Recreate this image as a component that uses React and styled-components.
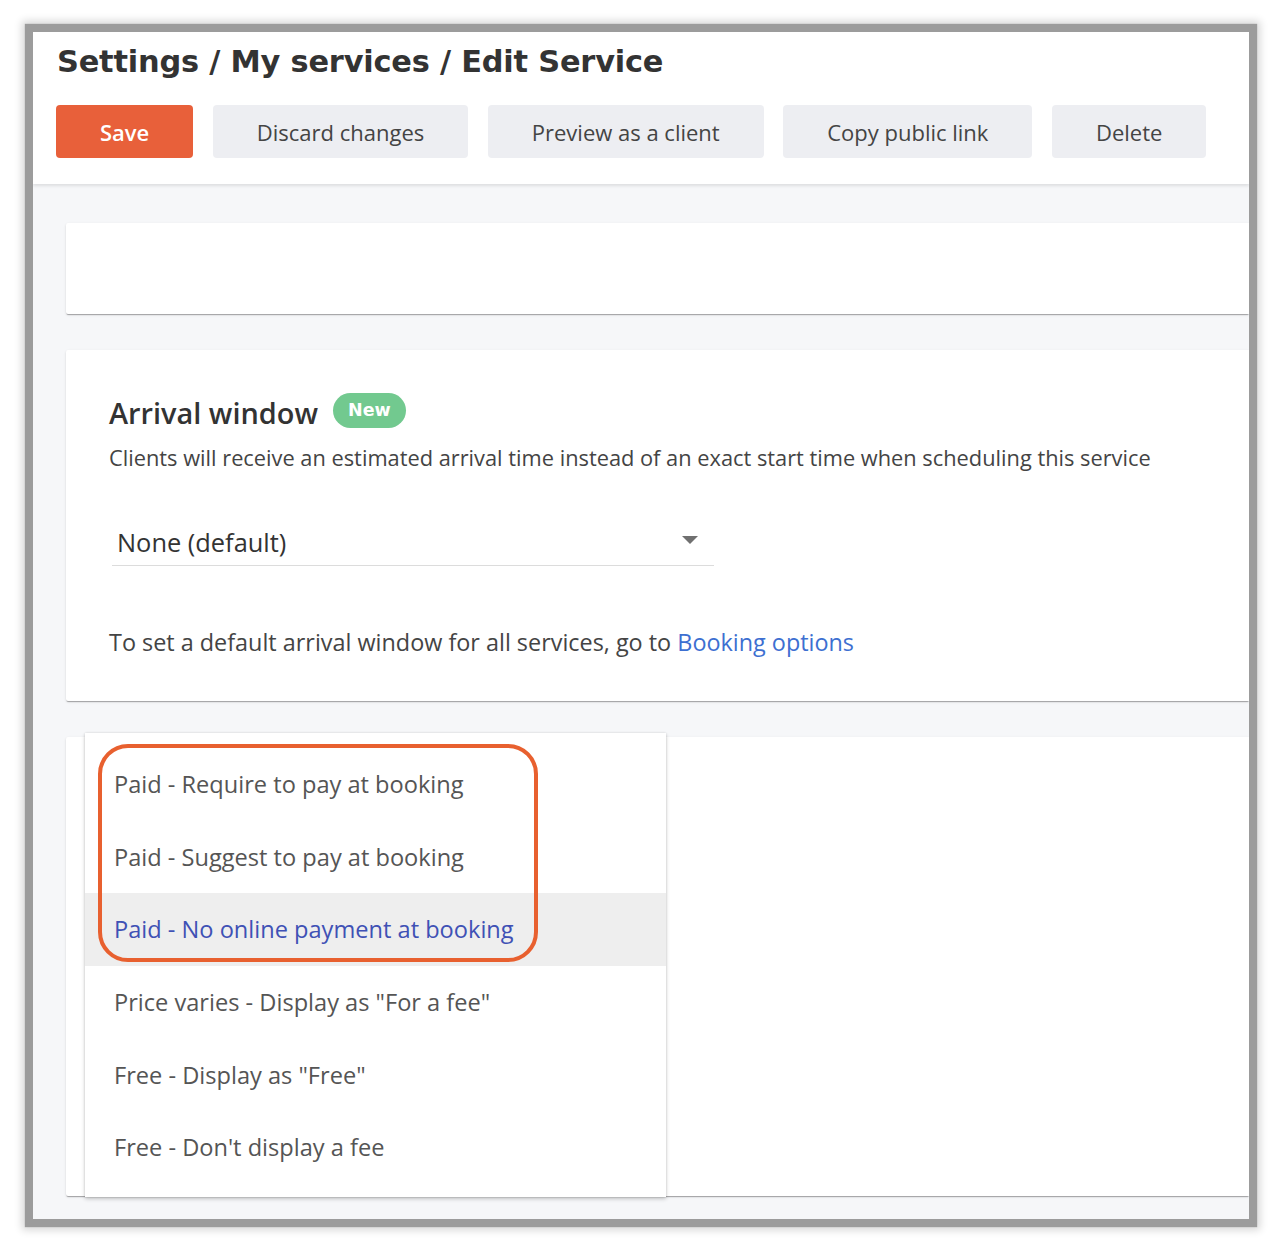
import React from 'react';
import styled, { createGlobalStyle } from 'styled-components';

const GlobalStyle = createGlobalStyle`
  html, body {
    margin: 0;
    padding: 0;
    background: #ffffff;
  }
  body {
    font-family: 'Open Sans', 'Liberation Sans', sans-serif;
    color: #444;
  }
`;

const Page = styled.div`
  padding: 32px 27px 27px 33px;
`;

const Frame = styled.div`
  width: 1216px;
  height: 1187px;
  display: flex;
  flex-direction: column;
  overflow: hidden;
  background: #f6f7f9;
  box-shadow: 0 0 1px 8px #9c9c9c, 0 0 8px 11px rgba(0, 0, 0, 0.16);
`;

const Header = styled.header`
  background: #fff;
  height: 152px;
  box-sizing: border-box;
  padding: 10px 24px 0 23px;
  box-shadow: 0 2px 3px rgba(0, 0, 0, 0.1);
  position: relative;
  z-index: 1;
`;

const Title = styled.h1`
  margin: 0 0 0 1px;
  font-family: 'DejaVu Sans', 'Liberation Sans', sans-serif;
  font-weight: bold;
  font-size: 30.4px;
  line-height: 40px;
  color: #333;
  letter-spacing: -0.2px;
`;

const Toolbar = styled.div`
  display: flex;
  gap: 19.5px;
  margin-top: 23px;
`;

const Button = styled.button`
  height: 53px;
  padding: 0 44px;
  border: none;
  border-radius: 4px;
  font-family: 'Open Sans', sans-serif;
  font-size: 22px;
  background: ${(p) => (p.$primary ? '#e8603a' : '#edeef2')};
  color: ${(p) => (p.$primary ? '#fff' : '#444')};
  font-weight: ${(p) => (p.$primary ? 600 : 400)};
`;

const Content = styled.main`
  flex: 1;
  display: flex;
  flex-direction: column;
  gap: 36px;
  padding: 39px 0 23px 33px;
`;

const Card = styled.section`
  background: #fff;
  height: ${(p) => p.$h}px;
  box-sizing: border-box;
  border-radius: 2px 0 0 2px;
  position: relative;
  box-shadow: 0 2px 1px -1px rgba(0, 0, 0, 0.2), 0 1px 1px rgba(0, 0, 0, 0.12),
    0 1px 3px rgba(0, 0, 0, 0.1);
`;

const CardBody = styled.div`
  padding: 41px 43px 0;
`;

const HeadingRow = styled.div`
  display: flex;
  align-items: center;
  gap: 15px;
`;

const Heading = styled.h2`
  margin: 0;
  font-size: 28.9px;
  font-weight: 600;
  color: #333;
  line-height: 44px;
`;

const Badge = styled.span`
  display: inline-flex;
  align-items: center;
  height: 35px;
  padding: 0 15px;
  border-radius: 18px;
  background: #72c98f;
  color: #fff;
  font-family: 'DejaVu Sans', sans-serif;
  font-weight: bold;
  font-size: 17.5px;
  margin-top: -6px;
`;

const Description = styled.p`
  margin: 8px 0 0;
  font-size: 21.8px;
  line-height: 30px;
  color: #444;
`;

const Select = styled.div`
  width: 602px;
  margin: 45px 0 0 3px;
  height: 48px;
  box-sizing: border-box;
  display: flex;
  align-items: center;
  justify-content: space-between;
  padding: 0 16px 0 5px;
  border-bottom: 1px solid #dcdcdc;
  font-size: 25.4px;
  color: #333;
`;

const Caret = styled.span`
  width: 0;
  height: 0;
  border-left: 8px solid transparent;
  border-right: 8px solid transparent;
  border-top: 8px solid #707070;
  margin-top: -4px;
`;

const Help = styled.p`
  margin: 60px 0 0;
  font-size: 23.4px;
  line-height: 32px;
  color: #444;
`;

const Link = styled.a`
  color: #3d6fd1;
  text-decoration: none;
`;

const Menu = styled.ul`
  position: absolute;
  left: 19px;
  top: -4px;
  width: 581px;
  height: 464px;
  box-sizing: border-box;
  margin: 0;
  padding: 15px 0 14px;
  list-style: none;
  background: #fff;
  box-shadow: 0 2px 4px rgba(0, 0, 0, 0.2), 0 0 2px rgba(0, 0, 0, 0.12);
`;

const MenuItem = styled.li`
  height: 72.6px;
  display: flex;
  align-items: center;
  padding-left: 29px;
  font-size: 23.6px;
  color: ${(p) => (p.$active ? '#3f51b5' : '#555')};
  background: ${(p) => (p.$active ? '#eeeeee' : 'transparent')};
`;

const Highlight = styled.div`
  position: absolute;
  left: 32px;
  top: 7px;
  width: 440px;
  height: 218px;
  box-sizing: border-box;
  border: 4px solid #e8602f;
  border-radius: 30px;
  pointer-events: none;
`;

const buttons = [
  { label: 'Save', primary: true },
  { label: 'Discard changes' },
  { label: 'Preview as a client' },
  { label: 'Copy public link' },
  { label: 'Delete' },
];

const options = [
  'Paid - Require to pay at booking',
  'Paid - Suggest to pay at booking',
  'Paid - No online payment at booking',
  'Price varies - Display as "For a fee"',
  'Free - Display as "Free"',
  "Free - Don't display a fee",
];

const App = () => (
  <Page>
    <GlobalStyle />
    <Frame>
      <Header>
        <Title>Settings / My services / Edit Service</Title>
        <Toolbar>
          {buttons.map((b) => (
            <Button key={b.label} $primary={b.primary}>
              {b.label}
            </Button>
          ))}
        </Toolbar>
      </Header>
      <Content>
        <Card $h={91} />
        <Card $h={351}>
          <CardBody>
            <HeadingRow>
              <Heading>Arrival window</Heading>
              <Badge>New</Badge>
            </HeadingRow>
            <Description>
              Clients will receive an estimated arrival time instead of an exact start time when
              scheduling this service
            </Description>
            <Select>
              None (default)
              <Caret />
            </Select>
            <Help>
              To set a default arrival window for all services, go to{' '}
              <Link href="#">Booking options</Link>
            </Help>
          </CardBody>
        </Card>
        <Card $h={459}>
          <Menu>
            {options.map((o, i) => (
              <MenuItem key={o} $active={i === 2}>
                {o}
              </MenuItem>
            ))}
          </Menu>
          <Highlight />
        </Card>
      </Content>
    </Frame>
  </Page>
);

export default App;
